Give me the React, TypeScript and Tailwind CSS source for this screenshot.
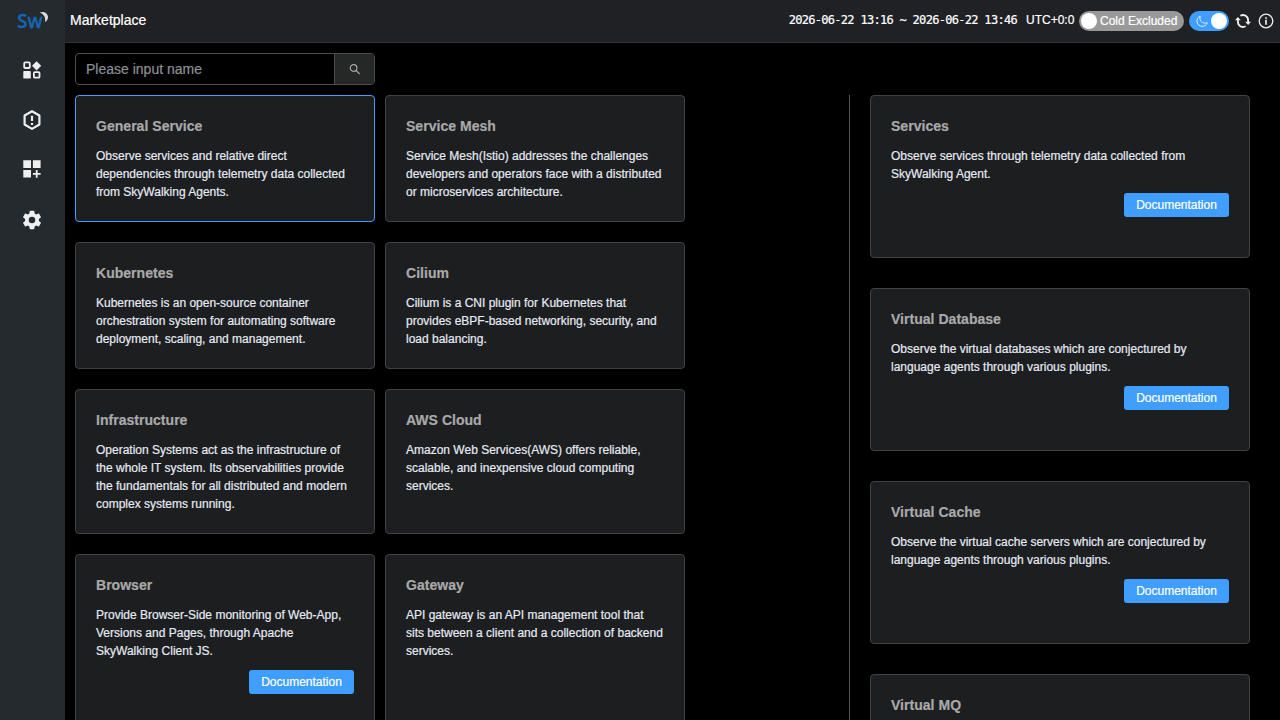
import React from "react";

type Item = { title: string; lines: string[]; doc?: boolean; active?: boolean };

const layers: Item[][] = [
  [
    { title: "General Service", active: true, lines: ["Observe services and relative direct", "dependencies through telemetry data collected", "from SkyWalking Agents."] },
    { title: "Service Mesh", lines: ["Service Mesh(Istio) addresses the challenges", "developers and operators face with a distributed", "or microservices architecture."] },
  ],
  [
    { title: "Kubernetes", lines: ["Kubernetes is an open-source container", "orchestration system for automating software", "deployment, scaling, and management."] },
    { title: "Cilium", lines: ["Cilium is a CNI plugin for Kubernetes that", "provides eBPF-based networking, security, and", "load balancing."] },
  ],
  [
    { title: "Infrastructure", lines: ["Operation Systems act as the infrastructure of", "the whole IT system. Its observabilities provide", "the fundamentals for all distributed and modern", "complex systems running."] },
    { title: "AWS Cloud", lines: ["Amazon Web Services(AWS) offers reliable,", "scalable, and inexpensive cloud computing", "services."] },
  ],
  [
    { title: "Browser", doc: true, lines: ["Provide Browser-Side monitoring of Web-App,", "Versions and Pages, through Apache", "SkyWalking Client JS."] },
    { title: "Gateway", lines: ["API gateway is an API management tool that", "sits between a client and a collection of backend", "services."] },
  ],
];

const services: Item[] = [
  { title: "Services", doc: true, lines: ["Observe services through telemetry data collected from", "SkyWalking Agent."] },
  { title: "Virtual Database", doc: true, lines: ["Observe the virtual databases which are conjectured by", "language agents through various plugins."] },
  { title: "Virtual Cache", doc: true, lines: ["Observe the virtual cache servers which are conjectured by", "language agents through various plugins."] },
  { title: "Virtual MQ", lines: [] },
];

function Card({ item, className }: { item: Item; className: string }) {
  return (
    <article className={`shrink-0 rounded border bg-[#1d1e20] px-5 pt-5 ${item.active ? "border-[#409eff]" : "border-[#414243]"} ${className}`}>
      <h2 className="text-sm leading-5 font-bold tracking-[0.03px] text-[#a9a9a9]">{item.title}</h2>
      <p className="mt-[11px] text-xs leading-[18px] whitespace-nowrap text-[#e5eaf3]">
        {item.lines.map((line) => (
          <span key={line} className="block">{line}</span>
        ))}
      </p>
      {item.doc && (
        <div className="mt-[10px] flex justify-end">
          <button className="h-6 w-[105px] rounded-[3px] bg-[#409eff] text-xs leading-6 text-white">Documentation</button>
        </div>
      )}
    </article>
  );
}

function Sidebar() {
  return (
    <nav className="flex w-[65px] shrink-0 flex-col items-start bg-[#252a2f] pl-5 text-[#efefef]">
      <svg className="mt-[8px] -ml-[5px] h-6 w-[34px] overflow-visible" viewBox="0 0 34 24">
        <text x="2.2" y="19.6" fontFamily="Open Sans, sans-serif" fontWeight="600" fontSize="19.5" textLength="25.4" lengthAdjust="spacingAndGlyphs" fill="#1368b3" stroke="#1368b3" strokeWidth=".3">Sw</text>
        <path d="M24.6 4.5C28.5 2.8 32.6 4.8 33 8.7c.2 2.2-.9 4.2-3 5.3.9-4.2-1-7.8-5.4-9.5Z" fill="#d9dadb" />
      </svg>
      <svg className="mt-[26px] size-6" viewBox="0 0 24 24" fill="none" stroke="currentColor" strokeWidth="1.8">
        <rect x="4.2" y="4.4" width="5.6" height="5.6" rx="1" />
        <path d="M16.6 3.4 21 7.8 16.6 12.2 12.2 7.8Z" fill="currentColor" stroke="currentColor" strokeWidth=".4" strokeLinejoin="round" />
        <rect x="3.3" y="13" width="7.5" height="7.6" rx=".9" fill="currentColor" stroke="none" />
        <rect x="13.9" y="14.1" width="5.6" height="5.6" rx="1" />
      </svg>
      <svg className="mt-[26px] size-6" viewBox="0 0 24 24" fill="none" stroke="currentColor" strokeWidth="2.2" strokeLinejoin="round">
        <path d="m12 3.3 7.4 4.2v9L12 20.9l-7.4-4.4v-9Z" />
        <path d="M12 7.8V13M12 14.9v2.1" />
      </svg>
      <svg className="mt-[25px] h-6 w-6" viewBox="0 0 24 24" fill="currentColor">
        <path d="M3.3 3.3H11V11H3.3zM12.9 3.3h7.7V11h-7.7zM3.3 12.9H11v7.7H3.3zM15.8 12.9h1.8v3h3v1.8h-3v3h-1.8v-3h-2.9v-1.8h2.9z" />
      </svg>
      <svg className="mt-[27px] size-6" viewBox="-.5 -.5 25 25" fill="currentColor">
        <path d="M19.14 12.94c.04-.3.06-.61.06-.94 0-.32-.02-.64-.07-.94l2.03-1.58c.18-.14.23-.41.12-.61l-1.92-3.32c-.12-.22-.37-.29-.59-.22l-2.39.96c-.5-.38-1.03-.7-1.62-.94l-.36-2.54c-.04-.24-.24-.41-.48-.41h-3.84c-.24 0-.43.17-.47.41l-.36 2.54c-.59.24-1.13.57-1.62.94l-2.39-.96c-.22-.08-.47 0-.59.22L2.74 8.87c-.12.21-.08.47.12.61l2.03 1.58c-.05.3-.09.63-.09.94s.02.64.07.94l-2.03 1.58c-.18.14-.23.41-.12.61l1.92 3.32c.12.22.37.29.59.22l2.39-.96c.5.38 1.03.7 1.62.94l.36 2.54c.05.24.24.41.48.41h3.84c.24 0 .44-.17.47-.41l.36-2.54c.59-.24 1.13-.56 1.62-.94l2.39.96c.22.08.47 0 .59-.22l1.92-3.32c.12-.22.07-.47-.12-.61l-2.01-1.58zM12 15.4a3.4 3.4 0 1 1 0-6.8 3.4 3.4 0 0 1 0 6.8z" />
      </svg>
    </nav>
  );
}

function Header() {
  return (
    <header className="flex h-[43px] shrink-0 items-center border-b border-[#333537] bg-[#202124] pr-[6px] pl-[5px] text-white">
      <h1 className="grow pb-[2px] text-sm leading-5">Marketplace</h1>
      <span className="mr-[9px] pb-[2px] font-['DejaVu_Sans_Mono',monospace] text-xs leading-5 tracking-[-0.7px] whitespace-pre">2026-06-22 13:16 ~ 2026-06-22 13:46</span>
      <span className="w-[53px] pb-[2px] text-xs leading-5">UTC+0:0</span>
      <div className="flex h-5 w-[105px] items-center rounded-full bg-[#999] pl-[2px]">
        <i className="size-4 rounded-full bg-white" />
        <span className="ml-[3px] text-xs whitespace-nowrap">Cold Excluded</span>
      </div>
      <div className="ml-[5px] flex h-5 w-10 items-center rounded-full bg-[#409eff] pr-[2px] pl-[7px]">
        <svg className="size-3" viewBox="0 0 12 12" fill="none" stroke="#edf6ff" strokeWidth=".9" strokeLinejoin="round">
          <path d="M4.3 1.2C1.9 2.2.7 4.4 1 6.8c.4 2.6 2.4 4.4 4.9 4.5 2.4.1 4.6-1.2 5.4-3.6C8.9 8.5 6.7 8 5.3 6.6 3.9 5.2 3.5 3.3 4.3 1.2Z" />
        </svg>
        <i className="ml-auto size-4 rounded-full bg-white" />
      </div>
      <svg className="ml-[6px] h-4 w-4" viewBox="0 0 16 16" fill="none" stroke="#eee" strokeWidth="1.8">
        <path d="M2.9 6.5V8.5A5.2 5.2 0 0 0 10.6 13.3M13.1 9.5V7.5A5.2 5.2 0 0 0 5.4 2.7" />
        <path d="M0 7.3 2.9 4 5.8 7.3ZM16 8.7 13.1 12 10.2 8.7Z" fill="#eee" stroke="none" />
      </svg>
      <svg className="ml-[7px] size-4" viewBox="0 0 16 16" fill="none" stroke="#eee" strokeWidth="1.3">
        <circle cx="8" cy="8" r="6.8" />
        <path d="M8 6.8v4.9M8 4.2v1.6" strokeWidth="1.7" />
      </svg>
    </header>
  );
}

export default function App() {
  const rowHeights = ["h-[127px]", "h-[127px]", "h-[145px]", "h-[187px]"];
  return (
    <div className="flex h-[720px] w-[1280px] overflow-hidden bg-black font-['Liberation_Sans',Arial,sans-serif] [-webkit-text-stroke:0.2px]">
      <Sidebar />
      <div className="flex min-w-0 grow flex-col">
        <Header />
        <main className="flex min-h-0 grow flex-col overflow-hidden pt-[10px] pl-[10px]">
          <div className="flex h-8 w-[300px] shrink-0 rounded border border-[#4c4d4f]">
            <input className="min-w-0 grow px-[10px] text-sm text-white placeholder-[#8d9095] outline-none" placeholder="Please input name" />
            <button className="flex w-10 items-center justify-center rounded-r-[3px] border-l border-[#4c4d4f] bg-[#262727]">
              <svg className="size-3" viewBox="0 0 12 12" fill="none" stroke="#a3a6ad" strokeWidth="1.2">
                <circle cx="4.6" cy="5" r="3.3" />
                <path d="m7 7.4 3.6 3.6" />
              </svg>
            </button>
          </div>
          <div className="mt-[10px] flex min-h-0 grow">
            <section className="flex w-[775px] shrink-0 flex-col gap-5 border-r border-[#55575a]">
              {layers.map((row, i) => (
                <div key={i} className="flex shrink-0 gap-[10px]">
                  {row.map((item) => (
                    <Card key={item.title} item={item} className={`w-[300px] ${rowHeights[i]}`} />
                  ))}
                </div>
              ))}
            </section>
            <section className="ml-5 flex w-[380px] flex-col gap-[30px]">
              {services.map((item) => (
                <Card key={item.title} item={item} className="h-[163px]" />
              ))}
            </section>
          </div>
        </main>
      </div>
    </div>
  );
}
